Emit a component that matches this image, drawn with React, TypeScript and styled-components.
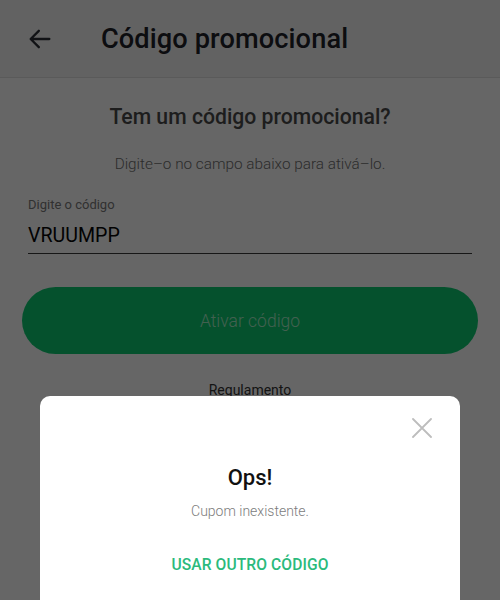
import styled, { createGlobalStyle } from "styled-components";

const GlobalStyle = createGlobalStyle`
  html, body {
    margin: 0;
    padding: 0;
    background: #ffffff;
    font-family: Roboto, "Noto Sans", sans-serif;
    overflow: hidden;
  }
`;

const App = () => {
  return (
    <>
      <GlobalStyle />
      <Page>
        <Header>
          <BackButton aria-label="Voltar">
            <svg width="24" height="24" viewBox="0 0 24 24" fill="none">
              <path
                d="M20 12H4.5M11 5l-7 7 7 7"
                stroke="#2b2f36"
                strokeWidth="2"
                strokeLinecap="round"
                strokeLinejoin="round"
              />
            </svg>
          </BackButton>
          <HeaderTitle>Código promocional</HeaderTitle>
        </Header>

        <Content>
          <Heading>Tem um código promocional?</Heading>
          <Subtitle>Digite–o no campo abaixo para ativá–lo.</Subtitle>

          <Field>
            <FieldLabel>Digite o código</FieldLabel>
            <FieldValue>VRUUMPP</FieldValue>
          </Field>

          <PrimaryButton>Ativar código</PrimaryButton>

          <TextLink>Regulamento</TextLink>
        </Content>
      </Page>

      <Overlay>
        <Modal>
          <CloseRow>
            <CloseButton aria-label="Fechar">
              <svg width="20" height="20" viewBox="0 0 20 20" fill="none">
                <path
                  d="M1 1l18 18M19 1L1 19"
                  stroke="#bdbdbd"
                  strokeWidth="1.8"
                  strokeLinecap="round"
                />
              </svg>
            </CloseButton>
          </CloseRow>
          <ModalTitle>Ops!</ModalTitle>
          <ModalText>Cupom inexistente.</ModalText>
          <ModalAction>USAR OUTRO CÓDIGO</ModalAction>
        </Modal>
      </Overlay>
    </>
  );
};

const Page = styled.div`
  display: flex;
  flex-direction: column;
  width: 500px;
  height: 600px;
  background: #ffffff;
`;

const Header = styled.header`
  display: flex;
  align-items: center;
  gap: 47px;
  height: 77px;
  padding: 0 26px;
  background: #f6f6f6;
  border-bottom: 1px solid #e2e2e2;
`;

const BackButton = styled.button`
  display: flex;
  padding: 0;
  border: none;
  background: none;

  & svg {
    width: 28px;
    height: 28px;
  }
`;

const HeaderTitle = styled.h1`
  margin: 0;
  font-size: 27.2px;
  font-weight: 500;
  color: #1e2229;
  letter-spacing: 0.1px;
`;

const Content = styled.main`
  display: flex;
  flex-direction: column;
  align-items: center;
  padding: 0 22px;
`;

const Heading = styled.h2`
  margin: 26px 0 0;
  font-size: 21.2px;
  font-weight: 500;
  color: #4a4a4a;
  line-height: 26px;
`;

const Subtitle = styled.p`
  margin: 24px 0 0;
  font-size: 15.3px;
  font-weight: 300;
  color: #6e6e6e;
  line-height: 20px;
`;

const Field = styled.div`
  display: flex;
  flex-direction: column;
  align-self: stretch;
  margin: 23px 6px 0;
  border-bottom: 1.5px solid #3a3a3a;
`;

const FieldLabel = styled.span`
  font-size: 13px;
  color: #7a7a7a;
  line-height: 16px;
`;

const FieldValue = styled.span`
  margin-top: 11px;
  padding-bottom: 5px;
  font-size: 19.6px;
  color: #050505;
  line-height: 24px;
`;

const PrimaryButton = styled.button`
  align-self: stretch;
  height: 67px;
  margin-top: 33px;
  border: none;
  border-radius: 34px;
  background: #0dcb72;
  font-family: Roboto, "Noto Sans", sans-serif;
  font-size: 17.5px;
  font-weight: 300;
  color: #a8f0c8;
`;

const TextLink = styled.span`
  margin-top: 28px;
  font-size: 14px;
  color: #333333;
`;

const Overlay = styled.div`
  position: fixed;
  inset: 0;
  display: flex;
  flex-direction: column;
  padding: 396px 40px 0;
  background: rgba(0, 0, 0, 0.6);
`;

const Modal = styled.div`
  display: flex;
  flex-direction: column;
  align-items: center;
  flex: 1;
  margin-bottom: -20px;
  background: #ffffff;
  border-radius: 10px;
`;

const CloseRow = styled.div`
  display: flex;
  justify-content: flex-end;
  align-self: stretch;
  padding: 22px 28px 0 0;
`;

const CloseButton = styled.button`
  display: flex;
  padding: 0;
  border: none;
  background: none;
`;

const ModalTitle = styled.h3`
  margin: 26px 0 0;
  font-size: 22px;
  font-weight: 500;
  color: #111111;
  line-height: 28px;
`;

const ModalText = styled.p`
  margin: 10px 0 0;
  font-size: 14px;
  font-weight: 300;
  color: #7c7c7c;
  line-height: 18px;
`;

const ModalAction = styled.button`
  margin-top: 36px;
  padding: 0;
  border: none;
  background: none;
  font-family: Roboto, "Noto Sans", sans-serif;
  font-size: 15.6px;
  font-weight: 500;
  color: #2bba7c;
  letter-spacing: 0.1px;
`;

export default App;
